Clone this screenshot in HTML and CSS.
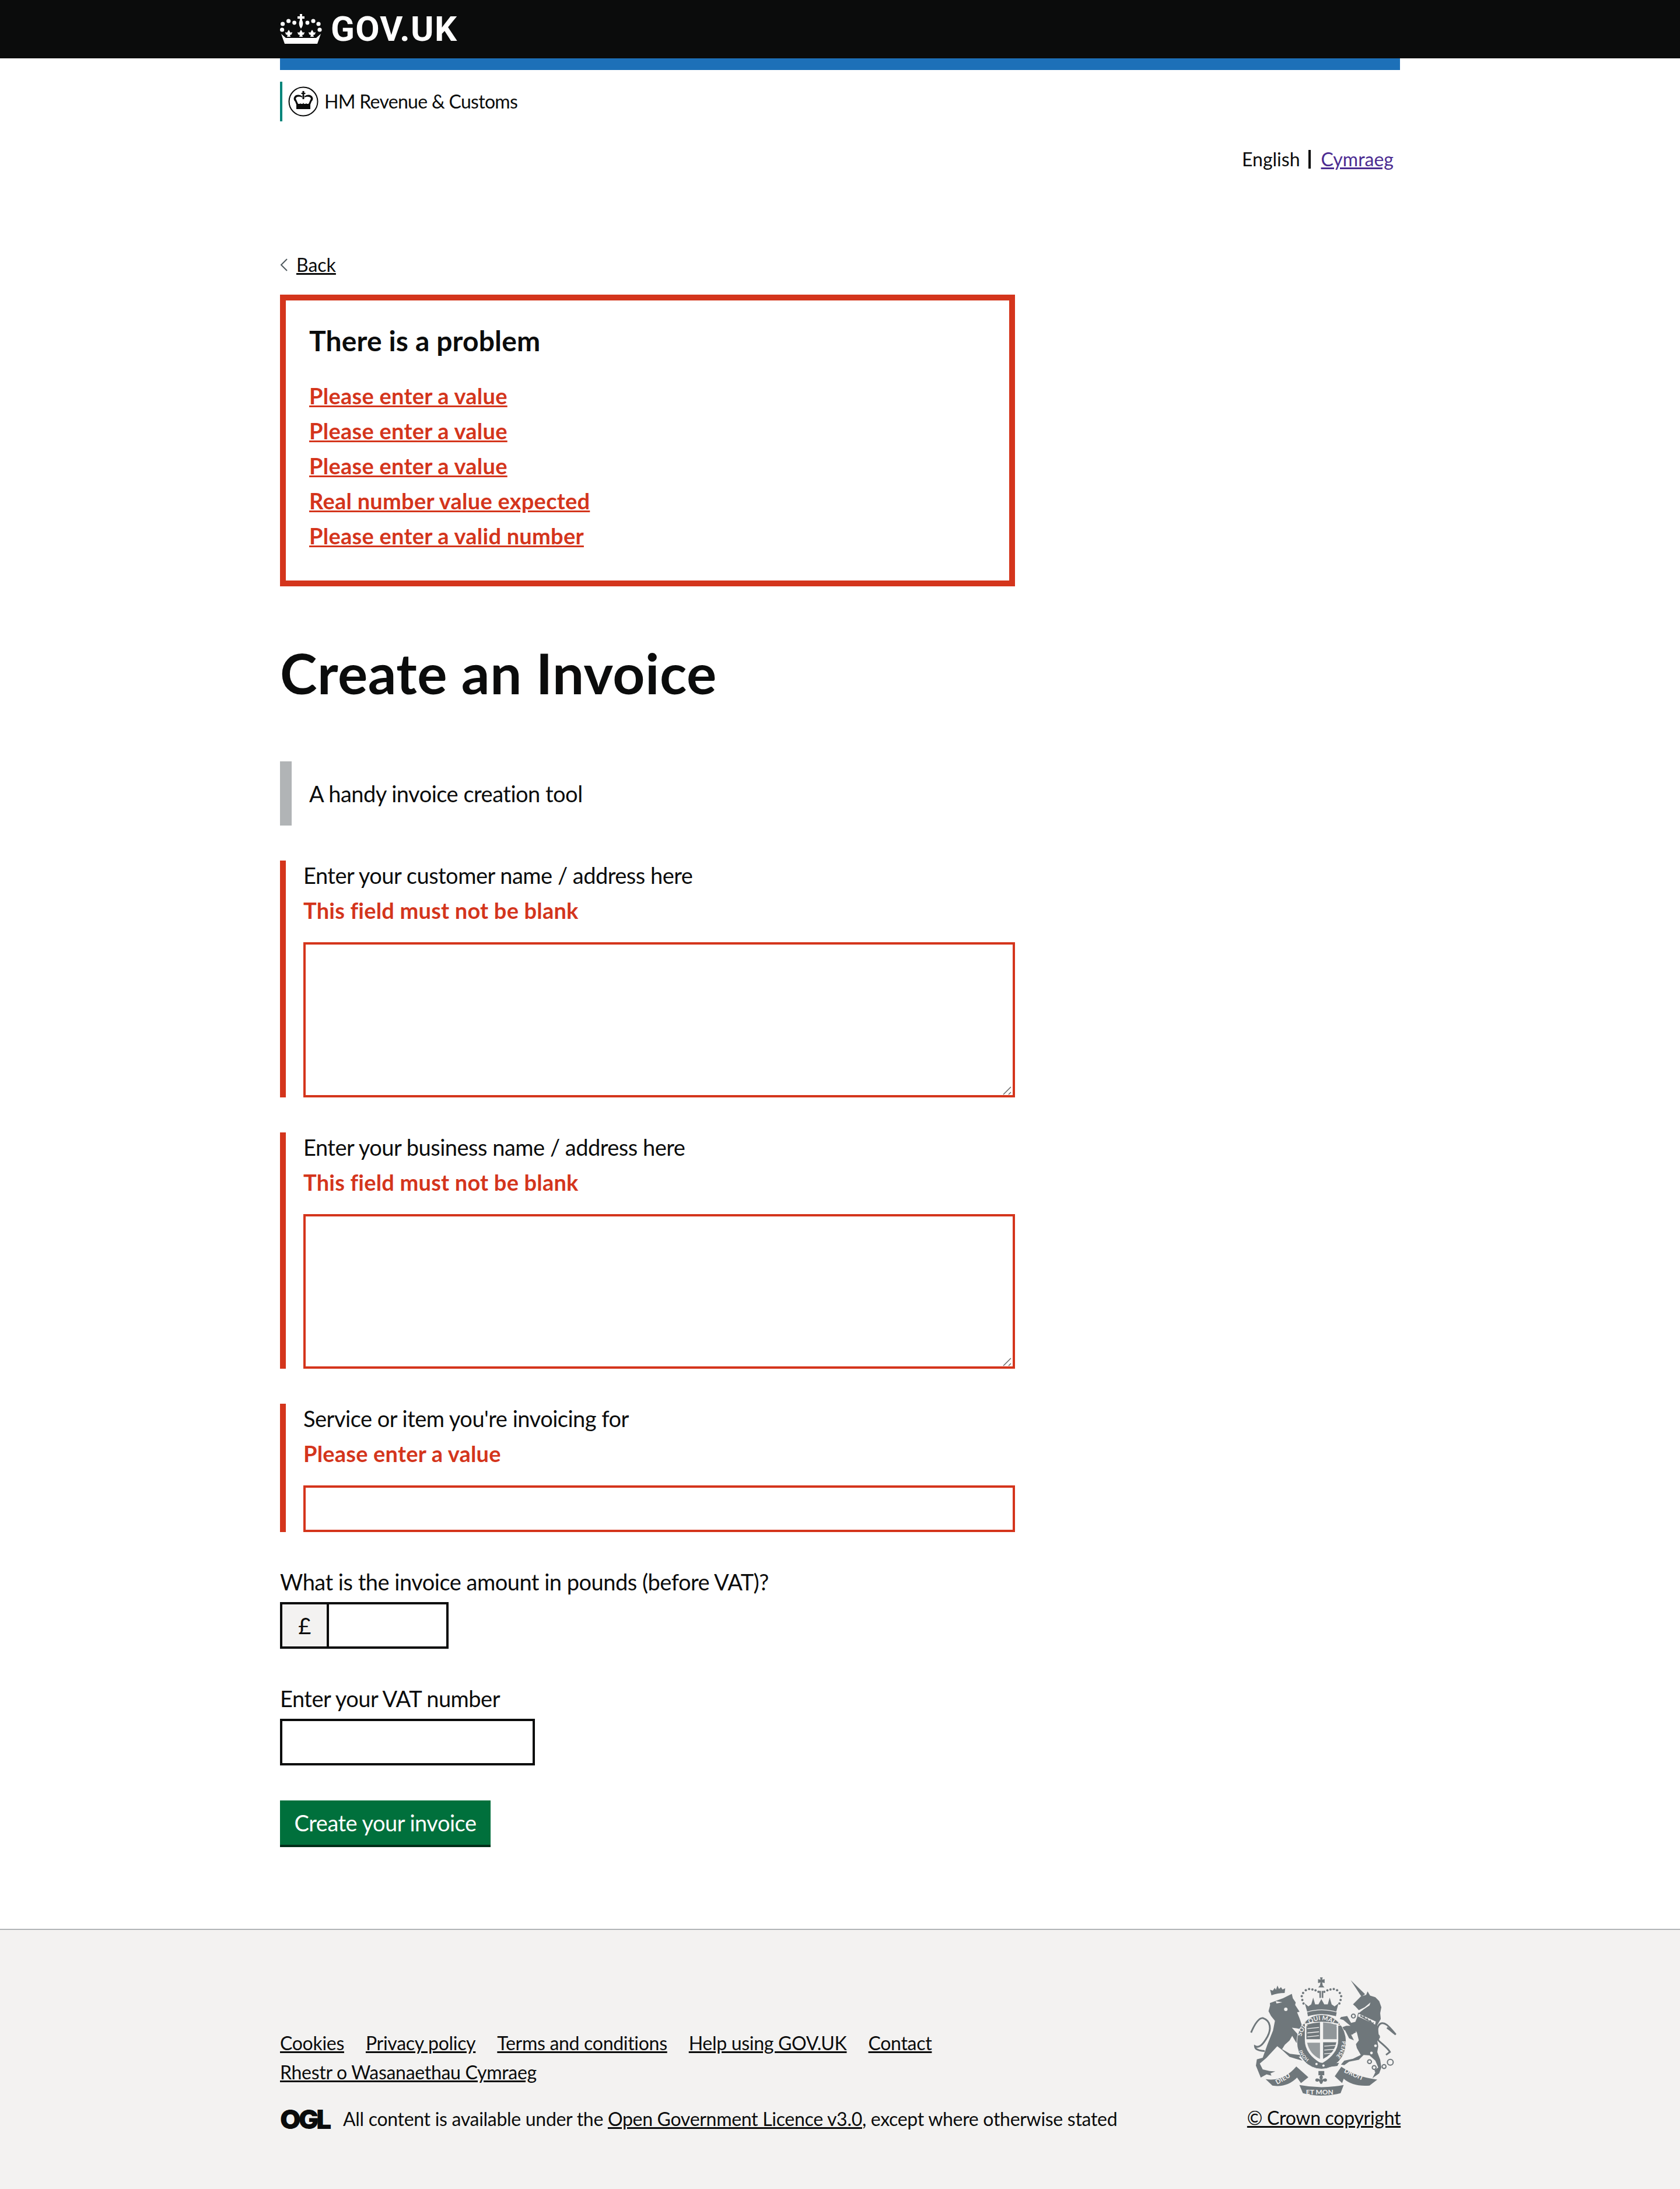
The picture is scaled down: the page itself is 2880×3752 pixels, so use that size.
FILE: index.html
```html
<!DOCTYPE html>
<html lang="en">

<head>
    <meta charset="UTF-8">
    <title>Create an Invoice</title>
    <link rel="stylesheet" href="styles.css">
</head>

<body>

    <header class="top-bar">
        <div class="wrap top-bar-inner">
            <svg class="top-crown" viewBox="0 0 72 52" aria-hidden="true">
                <g fill="#fff">
                    <path d="M34 0h4v4h4v4h-4v3c2 3 2 9-2 14-4-5-4-11-2-14V8h-4V4h4z"/>
                    <circle cx="4.600" cy="17" r="3.600"/><circle cx="3.600" cy="27" r="3.600"/><circle cx="14.600" cy="12" r="3.600"/><circle cx="24.600" cy="15" r="3.400"/>
                    <circle cx="47" cy="15" r="3.400"/><circle cx="57" cy="12" r="3.600"/><circle cx="66" cy="17" r="3.600"/><circle cx="68" cy="27" r="3.600"/>
                    <path d="M2 34l8 7h52l8-7-6 17H8z"/>
                    <path d="M15 27l3 5 3-1-1 4-3 1 1 3h-6l1-3-3-1-1-4 3 1z"/>
                    <path d="M36 27l3 5 3-1-1 4-3 1 1 3h-6l1-3-3-1-1-4 3 1z"/>
                    <path d="M55 27l3 5 3-1-1 4-3 1 1 3h-6l1-3-3-1-1-4 3 1z"/>
                </g>
            </svg>
            <span class="top-name">GOV.UK</span>
        </div>
    </header>

    <div class="wrap">
        <div class="blue-line"></div>

        <div class="org">
            <svg class="org-logo" viewBox="0 0 52 52" aria-hidden="true">
                <circle cx="26" cy="26" r="24.500" fill="none" stroke="#0b0c0c" stroke-width="2"/>
                <g fill="#0b0c0c">
                    <path d="M24.500 8h3v3h2v2h-2v9h-3v-9h-2v-2h2z"/>
                    <path d="M10 19c2-5 9-6 14-2v2c-4-2-10-2-11 2l4 9h18l4-9c-1-4-7-4-11-2v-2c5-4 12-3 14 2 1 3 0 5-2 7l-3 8H15l-3-8c-2-2-3-4-2-7z"/>
                    <path d="M14 32l2-3 2 3 3-3 3 3 2-4 2 4 3-3 3 3 2-3 2 3v7H14z"/>
                </g>
            </svg>
            <span>HM Revenue &amp; Customs</span>
        </div>

        <div class="lang">
            <span>English</span>
            <span class="lang-sep"></span>
            <a class="lang-link" href="#">Cymraeg</a>
        </div>

        <div class="back">
            <svg class="back-arrow" viewBox="0 0 14 22" aria-hidden="true"><path d="M12 1L2 11l10 10" fill="none" stroke="#505a5f" stroke-width="2"/></svg>
            <a href="#">Back</a>
        </div>

        <main class="content">
            <div class="error-summary">
                <h2 class="error-title">There is a problem</h2>
                <ul class="error-list">
                    <li><a href="#">Please enter a value</a></li>
                    <li><a href="#">Please enter a value</a></li>
                    <li><a href="#">Please enter a value</a></li>
                    <li><a href="#">Real number value expected</a></li>
                    <li><a href="#">Please enter a valid number</a></li>
                </ul>
            </div>

            <h1 class="page-title">Create an Invoice</h1>

            <p class="inset">A handy invoice creation tool</p>

            <form>
                <div class="group group-error">
                    <label class="label" for="customer">Enter your customer name / address here</label>
                    <p class="error-msg">This field must not be blank</p>
                    <div class="area-box">
                        <textarea class="area" id="customer"></textarea>
                        <svg class="grip" viewBox="0 0 15 15" aria-hidden="true"><path d="M1 14L14 1M10 14l4-4" fill="none" stroke="#666" stroke-width="1.500"/></svg>
                    </div>
                </div>

                <div class="group group-error">
                    <label class="label" for="business">Enter your business name / address here</label>
                    <p class="error-msg">This field must not be blank</p>
                    <div class="area-box">
                        <textarea class="area" id="business"></textarea>
                        <svg class="grip" viewBox="0 0 15 15" aria-hidden="true"><path d="M1 14L14 1M10 14l4-4" fill="none" stroke="#666" stroke-width="1.500"/></svg>
                    </div>
                </div>

                <div class="group group-error">
                    <label class="label" for="service">Service or item you're invoicing for</label>
                    <p class="error-msg">Please enter a value</p>
                    <input class="field field-error" type="text" id="service">
                </div>

                <div class="group">
                    <label class="label" for="amount">What is the invoice amount in pounds (before VAT)?</label>
                    <div class="money">
                        <div class="money-sign">£</div>
                        <input class="field money-field" type="text" id="amount">
                    </div>
                </div>

                <div class="group">
                    <label class="label" for="vat">Enter your VAT number</label>
                    <input class="field vat-field" type="text" id="vat">
                </div>

                <button class="submit" type="button">Create your invoice</button>
            </form>
        </main>
    </div>

    <footer class="footer">
        <div class="wrap footer-inner">
            <div class="footer-left">
                <ul class="footer-links">
                    <li><a href="#">Cookies</a></li>
                    <li><a href="#">Privacy policy</a></li>
                    <li><a href="#">Terms and conditions</a></li>
                    <li><a href="#">Help using GOV.UK</a></li>
                    <li><a href="#">Contact</a></li>
                    <li><a href="#">Rhestr o Wasanaethau Cymraeg</a></li>
                </ul>
                <div class="licence">
                    <span class="ogl">OGL</span>
                    <span>All content is available under the <a href="#">Open Government Licence v3.0</a>, except where otherwise stated</span>
                </div>
            </div>
            <div class="footer-right">
                <svg class="arms" viewBox="130 140 760 620" aria-hidden="true">
                    <defs>
                        <path id="garter-top" d="M393 470A105 104 0 0 1 603 470"/>
                        <path id="garter-right" d="M603 470A105 100 0 0 1 555 565"/>
                        <path id="garter-left" d="M438 570A105 100 0 0 1 393 490"/>
                    </defs>
                    <g fill="#6f777b">
                        <!-- main crown -->
                        <path d="M490 146h14l-3 12 13-3v20l-13-3 3 12h-14l3-12-13 3v-20l13 3z"/>
                        <path d="M497 178l16 20h-32z"/>
                        <path d="M487 216h8v36h-8zM499 216h8v36h-8z"/>
                        <path d="M412 280L430 295 445 285 455 250 465 285 482 285 497 258 512 285 530 285 540 250 550 285 565 295 585 280 574 322Q498 300 424 322z"/>
                        <path d="M424 326Q498 304 576 326L572 346Q498 324 428 346z"/>
                        <circle cx="399" cy="262" r="6"/><circle cx="396" cy="243" r="6"/><circle cx="403" cy="226" r="6"/><circle cx="417" cy="212" r="6"/><circle cx="434" cy="206" r="6"/>
                        <circle cx="451" cy="208" r="6"/><circle cx="467" cy="213" r="6"/><circle cx="482" cy="220" r="6"/><circle cx="512" cy="220" r="6"/><circle cx="528" cy="213" r="6"/>
                        <circle cx="544" cy="208" r="6"/><circle cx="561" cy="206" r="6"/><circle cx="578" cy="212" r="6"/><circle cx="592" cy="226" r="6"/><circle cx="599" cy="243" r="6"/>
                        <circle cx="596" cy="262" r="6"/><circle cx="405" cy="280" r="6"/><circle cx="590" cy="280" r="6"/>
                        <!-- lion -->
                        <path d="M232 265L300 240 345 218 350 240 365 262 362 275 385 310 372 312 385 345 395 375 395 393 387 399 369 395 345 392 385 436 407 480 395 492 367 468 347 434 333 458 309 480 295 502 335 526 385 532 408 537 380 542 400 562 365 552 333 542 295 507 270 487 215 547 180 577 195 607 230 615 260 617 235 627 240 639 215 632 185 649 160 587 165 555 195 547 220 477 248 407 258 357 238 332 225 307 233 277z" transform="translate(0 13)"/>
                        <path d="M205 525c-30 0-50-10-50-25 20 12 40-5 65-50 18-35 20-80-25-95-25 0-45 40-60 75" fill="none" stroke="#6f777b" stroke-width="9"/>
                        <path d="M240 238L233 210 247 214 257 200 263 210 271 188 279 206 289 196 297 208 311 202 308 226Q272 226 240 238z"/>
                        <circle cx="314" cy="310" r="9" fill="#f3f2f1"/>
                        <path d="M262 268L296 274 266 280z" fill="#f3f2f1"/>
                        <!-- unicorn -->
                        <path d="M648 160L722 232 704 246z"/>
                        <path d="M700 244L728 236 735 218 748 240 775 248 795 268 806 300 800 330 803 360 785 392 790 440 785 470 790 500 785 530 800 570 806 610 795 640 760 665 775 635 770 625 790 610 775 575 745 548 715 545 690 570 640 580 615 598 598 595 615 575 660 565 700 545 680 510 675 490 690 470 680 430 665 410 640 390 610 365 592 360 598 350 630 345 650 380 672 375 690 330 715 310 745 290 750 275 720 300 690 315 672 295 660 285 690 255z"/>
                        <path d="M670 395L625 395 598 405 620 420 640 460 665 470 650 440 675 430z"/>
                        <path d="M790 470c0-40-15-65 10-85 25-15 50 20 80 55-15-10-30-25-45-35" fill="none" stroke="#6f777b" stroke-width="9"/>
                        <path d="M785 465c25 25 55 45 65 65l-20 15" fill="none" stroke="#6f777b" stroke-width="9"/>
                        <path d="M688 330L780 372 775 392 684 348z" fill="#f3f2f1" stroke="#6f777b" stroke-width="4"/>
                        <path d="M694 345l8-6 8 10 8-4 8 14 8-4 8 14 8-4 8 14 10-2-4 10z"/>
                        <g fill="none" stroke="#6f777b" stroke-width="6">
                            <circle cx="662" cy="345" r="10"/><circle cx="652" cy="428" r="10"/><circle cx="786" cy="452" r="10"/><circle cx="745" cy="580" r="10"/>
                            <circle cx="769" cy="610" r="10"/><circle cx="820" cy="605" r="10"/><circle cx="852" cy="583" r="15"/>
                        </g>
                        <circle cx="776" cy="498" r="7" fill="#f3f2f1"/><circle cx="755" cy="535" r="7" fill="#f3f2f1"/>
                        <!-- garter and shield -->
                        <ellipse cx="498" cy="478" rx="127" ry="140" stroke="#f3f2f1" stroke-width="3"/>
                        <path d="M412 384Q498 364 584 384V470Q584 540 498 590 412 540 412 470z" fill="#f3f2f1"/>
                        <path d="M420 390Q455 380 490 378V464H420z"/>
                        <path d="M506 378Q541 380 576 390V464H506z" opacity=".75"/>
                        <path d="M424 482H490V566Q436 540 424 482z" opacity=".7"/>
                        <path d="M506 480H574Q566 535 506 566z"/>
                        <path d="M425 410l60-6M425 432l60-6M425 452l60-6M512 500l60-4M512 520l55-4M512 540l40-4" stroke="#f3f2f1" stroke-width="4" fill="none"/>
                        <path d="M422 566Q502 598 588 586L580 602Q500 616 418 586z"/>
                        <circle cx="472" cy="592" r="6" fill="#f3f2f1"/><circle cx="508" cy="600" r="6" fill="#f3f2f1"/>
                        <!-- motto -->
                        <path d="M210 670Q300 685 368 605L430 660 392 690 372 662Q320 715 245 703z"/>
                        <path d="M384 700Q497 722 612 700L596 742Q497 768 402 742z"/>
                        <path d="M600 606Q680 660 785 672L745 703Q660 710 612 668L604 690 566 655z"/>
                        <path d="M482 628h30v22h-30z"/>
                        <path d="M497 648c12 6 8 18 2 26 10-8 22-12 27-2 2 12-14 14-18 6l-8 16h-8l-8-16c-4 8-20 6-18-6 5-10 17-6 27 2-6-8-10-20 4-26z"/>
                    </g>
                    <g class="arms-text" fill="#f3f2f1">
                        <text font-size="32"><textPath href="#garter-top" startOffset="20">SOIT QUI MAL Y</textPath></text>
                        <text font-size="28"><textPath href="#garter-right" startOffset="4">PENSE</textPath></text>
                        <text font-size="24"><textPath href="#garter-left" startOffset="4">HONI</textPath></text>
                        <text font-size="34" transform="translate(270 698) rotate(-30)">DIEU</text>
                        <text font-size="36" x="418" y="748">ET MON</text>
                        <text font-size="34" transform="translate(612 634) rotate(24)">DROIT</text>
                    </g>
                </svg>
                <a class="copyright" href="#">© Crown copyright</a>
            </div>
        </div>
    </footer>

</body>

</html>
```

FILE: styles.css
```css
body {
    margin: 0;
    font-family: Lato, "Noto Sans", Arial, sans-serif;
    font-size: 38px;
    line-height: 50px;
    letter-spacing: -0.5px;
    color: #0b0c0c;
    background-color: #fff;
}

a {
    color: inherit;
}

.wrap {
    width: 1920px;
    margin: 0 auto;
}

.top-bar {
    height: 100px;
    background-color: #0b0c0c;
}

.top-bar-inner {
    display: flex;
    align-items: center;
    height: 100px;
}

.top-crown {
    width: 72px;
    height: 52px;
    margin-right: 15px;
}

.top-name {
    font-family: Roboto, Arial, sans-serif;
    font-size: 60px;
    font-weight: 700;
    line-height: 100px;
    letter-spacing: 1.3px;
    color: #fff;
}

.blue-line {
    height: 20px;
    background-color: #1d70b8;
}

.org {
    display: flex;
    align-items: center;
    height: 68px;
    margin-top: 20px;
    padding-left: 10px;
    border-left: 4px solid #00857a;
    font-size: 32px;
    letter-spacing: -0.7px;
}

.org-logo {
    width: 52px;
    height: 52px;
    margin-right: 10px;
}

.lang {
    display: flex;
    align-items: center;
    justify-content: flex-end;
    margin-top: 40px;
    padding-right: 11px;
    font-size: 32px;
    letter-spacing: 0;
}

.lang-sep {
    width: 4px;
    height: 32px;
    margin: 0 18px 0 14px;
    background-color: #0b0c0c;
}

.lang-link {
    color: #4c2c92;
}

.back {
    display: flex;
    align-items: center;
    margin-top: 136px;
    font-size: 32px;
    line-height: 40px;
    letter-spacing: 0;
}

.back-arrow {
    width: 14px;
    height: 22px;
    margin-right: 14px;
}

.error-summary {
    width: 1260px;
    box-sizing: border-box;
    margin-top: 31px;
    padding: 40px;
    border: 10px solid #d4351c;
}

.error-title {
    margin: 0 0 42px;
    font-size: 48px;
    line-height: 58px;
    font-weight: 700;
    letter-spacing: 0.15px;
}

.error-list {
    margin: 0;
    padding: 0;
    list-style: none;
}

.error-list li {
    margin-bottom: 10px;
}

.error-list a {
    position: relative;
    top: -2px;
    font-weight: 700;
    letter-spacing: 0.25px;
    color: #d4351c;
}

.page-title {
    margin: 98px 0 102px;
    font-size: 96px;
    line-height: 100px;
    font-weight: 700;
    letter-spacing: 0.55px;
}

.inset {
    width: 1260px;
    box-sizing: border-box;
    margin: 0 0 60px;
    padding: 30px;
    border-left: 20px solid #b1b4b6;
}

.group {
    width: 1260px;
    box-sizing: border-box;
    margin-bottom: 60px;
}

.group-error {
    padding-left: 30px;
    border-left: 10px solid #d4351c;
}

.label {
    display: block;
    margin-bottom: 10px;
}

.error-msg {
    margin: 0 0 30px;
    font-weight: 700;
    letter-spacing: 0.2px;
    color: #d4351c;
}

.area-box {
    position: relative;
}

.area {
    display: block;
    width: 100%;
    height: 265.5px;
    box-sizing: border-box;
    margin: 0;
    padding: 10px;
    border: 4px solid #d4351c;
    border-radius: 0;
    resize: none;
}

.grip {
    position: absolute;
    right: 6px;
    bottom: 4px;
    width: 15px;
    height: 15px;
}

.field {
    display: block;
    height: 80px;
    box-sizing: border-box;
    margin: 0;
    padding: 10px;
    border: 4px solid #0b0c0c;
    border-radius: 0;
    font: inherit;
}

.field-error {
    width: 100%;
    border-color: #d4351c;
}

.money {
    display: flex;
}

.money-sign {
    width: 80px;
    height: 80px;
    box-sizing: border-box;
    border: 4px solid #0b0c0c;
    border-right: 0;
    background-color: #f3f2f1;
    line-height: 72px;
    text-align: center;
}

.money-field {
    width: 209px;
}

.vat-field {
    width: 437px;
}

.submit {
    display: block;
    width: 361px;
    height: 80px;
    box-sizing: border-box;
    padding: 0;
    border: 0;
    border-bottom: 4px solid #002d18;
    background-color: #00703c;
    color: #fff;
    font: inherit;
    letter-spacing: -0.5px;
    cursor: pointer;
}

.footer {
    margin-top: 140px;
    border-top: 2px solid #b1b4b6;
    background-color: #f3f2f1;
    font-size: 32px;
    letter-spacing: -0.3px;
}

.footer-inner {
    display: flex;
    justify-content: space-between;
}

.footer-left {
    padding: 169px 0 95px;
}

.footer-links {
    display: flex;
    flex-wrap: wrap;
    width: 1300px;
    margin: 0 0 30px;
    padding: 0;
    list-style: none;
}

.footer-links li {
    margin-right: 37px;
}

.licence {
    display: flex;
    align-items: center;
}

.ogl {
    width: 81px;
    margin-right: 27px;
    font-family: Inter, Arial, sans-serif;
    font-size: 46px;
    font-weight: 900;
    letter-spacing: -4px;
    line-height: 50px;
}

.footer-right {
    display: flex;
    flex-direction: column;
    align-items: center;
    width: 261px;
    padding-top: 79px;
}

.arms {
    width: 253px;
    height: 207px;
    margin-bottom: 11px;
}

.arms-text {
    font-family: Lato, Arial, sans-serif;
    font-weight: 700;
    letter-spacing: 0;
}

.copyright {
    white-space: nowrap;
}
```
